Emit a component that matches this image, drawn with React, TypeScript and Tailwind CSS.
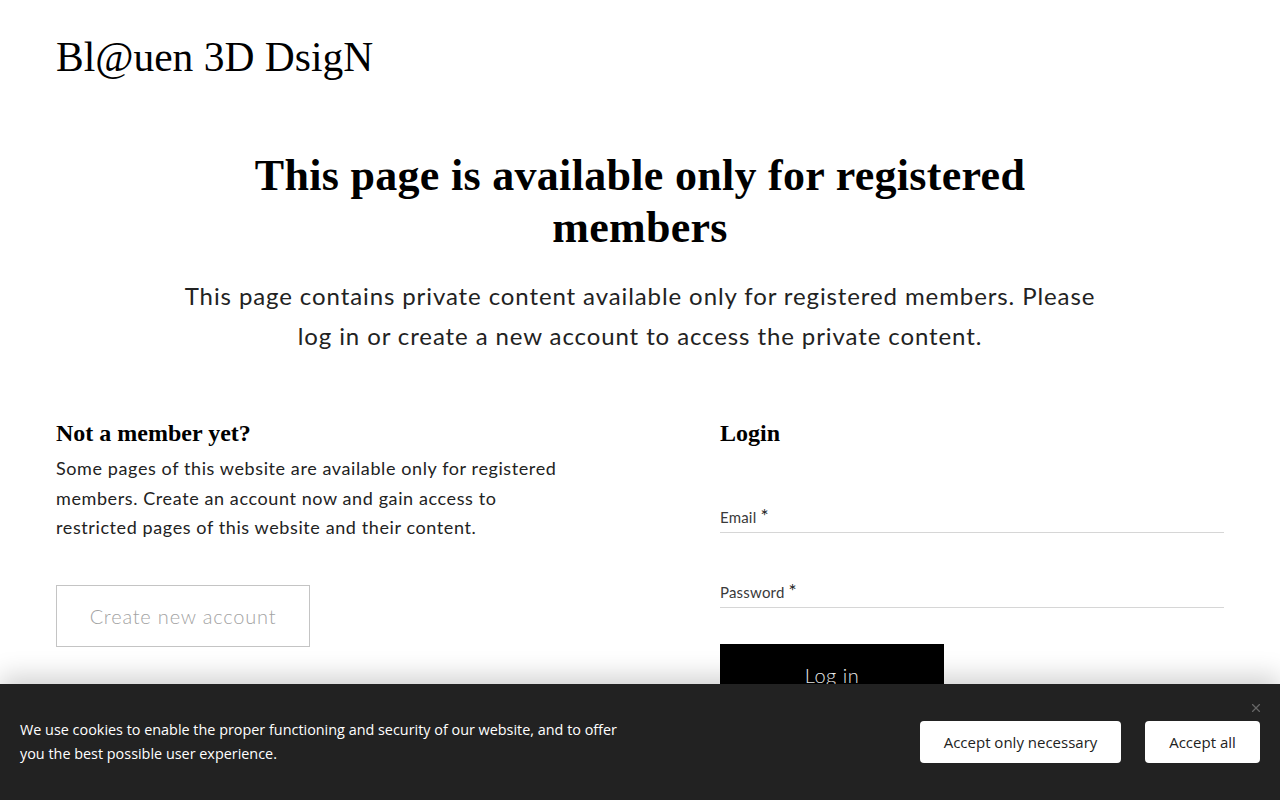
import { X } from 'lucide-react';

const serif = { fontFamily: '"Liberation Serif", serif' };

function Field({ label }: { label: string }) {
  return (
    <div className="border-b border-[#d6d6d6] pb-[4px] leading-[22px]">
      <span className="text-[15px] text-[#3a3a3a] tracking-[0.2px]">
        {label} <span className="text-[19px] text-[#222]">*</span>
      </span>
    </div>
  );
}

export default function App() {
  return (
    <div className="relative min-h-[800px] bg-white text-black overflow-hidden" style={{ fontFamily: 'Lato, "Open Sans", sans-serif' }}>
      <header className="px-14 pt-[30px]">
        <div className="text-[41.5px] leading-[54px]" style={serif}>
          Bl@uen 3D DsigN
        </div>
      </header>

      <main className="px-14">
        <section className="mx-auto mt-[66px] w-[940px] text-center">
          <h1 className="text-[44px] font-bold leading-[52px] tracking-[0.3px] px-[40px]" style={serif}>
            This page is available only for registered members
          </h1>
          <p className="mt-[22px] text-[24px] leading-[40px] tracking-[0.9px] text-[#222]">
            This page contains private content available only for registered members. Please log in or create a new account to access the private content.
          </p>
        </section>

        <section className="mt-[62px] grid grid-cols-2 gap-[160px]">
          <div>
            <h2 className="text-[24px] font-bold leading-[30px]" style={serif}>
              Not a member yet?
            </h2>
            <p className="mt-[6px] text-[18px] leading-[29.5px] tracking-[0.6px] text-[#222]">
              Some pages of this website are available only for registered members. Create an account now and gain access to restricted pages of this website and their content.
            </p>
            <button className="mt-[42px] h-[62px] w-[254px] border border-[#c4c4c4] text-[20px] text-[#a3a3a3] font-light tracking-[0.8px]">
              Create new account
            </button>
          </div>
          <div>
            <h2 className="text-[24px] font-bold leading-[30px]" style={serif}>
              Login
            </h2>
            <div className="mt-[57px] flex flex-col gap-[47px]">
              <Field label="Email" />
              <Field label="Password" />
            </div>
            <button className="mt-[36px] h-[62px] w-[224px] bg-black text-white text-[20px] font-light tracking-[0.5px]">
              Log in
            </button>
          </div>
        </section>
      </main>

      <div className="absolute inset-x-0 bottom-0 h-[116px] bg-[#222222] shadow-[0_-8px_24px_rgba(0,0,0,0.18)]" style={{ fontFamily: '"Open Sans", sans-serif' }}>
        <div className="flex h-full items-center justify-between pl-5 pr-5">
          <p className="w-[620px] text-[14.4px] leading-[24px] text-white">
            We use cookies to enable the proper functioning and security of our website, and to offer you the best possible user experience.
          </p>
          <div className="flex gap-6">
            <button className="h-[42px] w-[201px] rounded bg-white text-[15px] text-[#222]">Accept only necessary</button>
            <button className="h-[42px] w-[115px] rounded bg-white text-[15px] text-[#222]">Accept all</button>
          </div>
        </div>
        <button className="absolute right-[17px] top-[17px] text-[#666]">
          <X size={14} strokeWidth={2} />
        </button>
      </div>
    </div>
  );
}
